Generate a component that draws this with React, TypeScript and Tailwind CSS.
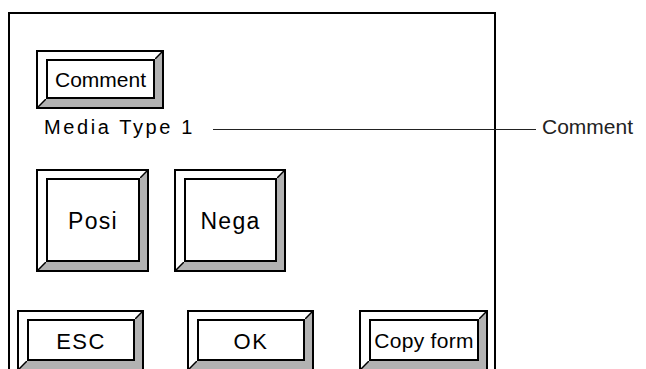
import React from "react";

const font = "font-['Liberation_Sans',Arial,sans-serif]";

interface BevelProps {
  size: string;
  textClass: string;
  children: React.ReactNode;
}

// raised key: black outline, light top/left bevel, grey bottom/right bevel
function BevelButton({ size, textClass, children }: BevelProps) {
  return (
    <div className={`relative shrink-0 border-2 border-black ${size}`}>
      <div className="h-full w-full border-t-[7px] border-r-[7px] border-b-[8px] border-l-[8px] border-t-white border-r-[#b2b2b2] border-b-[#b2b2b2] border-l-white">
        <div className="flex h-full w-full items-center justify-center border-2 border-black bg-white pt-[2px]">
          <span className={`${font} text-black ${textClass}`}>{children}</span>
        </div>
      </div>
      <svg className="absolute top-0 right-0 h-[7px] w-[7px]" viewBox="0 0 7 7">
        <line x1="7" y1="0" x2="0" y2="7" stroke="black" strokeWidth="1.5" />
      </svg>
      <svg className="absolute bottom-0 left-0 h-[8px] w-[8px]" viewBox="0 0 8 8">
        <line x1="0" y1="8" x2="8" y2="0" stroke="black" strokeWidth="1.5" />
      </svg>
    </div>
  );
}

export default function App() {
  return (
    <div className="h-[369px] w-[646px] overflow-hidden bg-white pt-[12px] pl-[8px]">
      <div className="h-[400px] w-[488px] border-2 border-b-0 border-black">
        <div className="mt-[36px] ml-[26px]">
          <BevelButton size="w-[128px] h-[59px]" textClass="text-[21px] leading-[24px]">
            Comment
          </BevelButton>
        </div>

        <div className="mt-[6px] ml-[34px] flex w-[589px] items-center leading-[24px]">
          <span className={`${font} text-[20px] tracking-[2.6px] text-black`}>Media Type 1</span>
          <div className="mt-[4px] ml-[18px] h-px flex-1 bg-[#222]" />
          <span className={`${font} ml-[6px] text-[21px] text-[#222]`}>Comment</span>
        </div>

        <div className="mt-[30px] ml-[26px] flex gap-[25px]">
          <BevelButton size="w-[113px] h-[103px]" textClass="text-[23px] tracking-[1.3px] leading-[26px]">
            Posi
          </BevelButton>
          <BevelButton size="w-[112px] h-[103px]" textClass="text-[23px] tracking-[1.3px] leading-[26px]">
            Nega
          </BevelButton>
        </div>

        <div className="mt-[38px] ml-[7px] flex">
          <BevelButton size="w-[127px] h-[61px]" textClass="text-[22px] tracking-[1.5px] leading-[25px]">
            ESC
          </BevelButton>
          <div className="ml-[43px]">
            <BevelButton size="w-[127px] h-[61px]" textClass="text-[22px] tracking-[1.5px] leading-[25px]">
              OK
            </BevelButton>
          </div>
          <div className="ml-[45px]">
            <BevelButton size="w-[129px] h-[61px]" textClass="text-[21px] tracking-[0.3px] leading-[24px]">
              Copy form
            </BevelButton>
          </div>
        </div>
      </div>
    </div>
  );
}
